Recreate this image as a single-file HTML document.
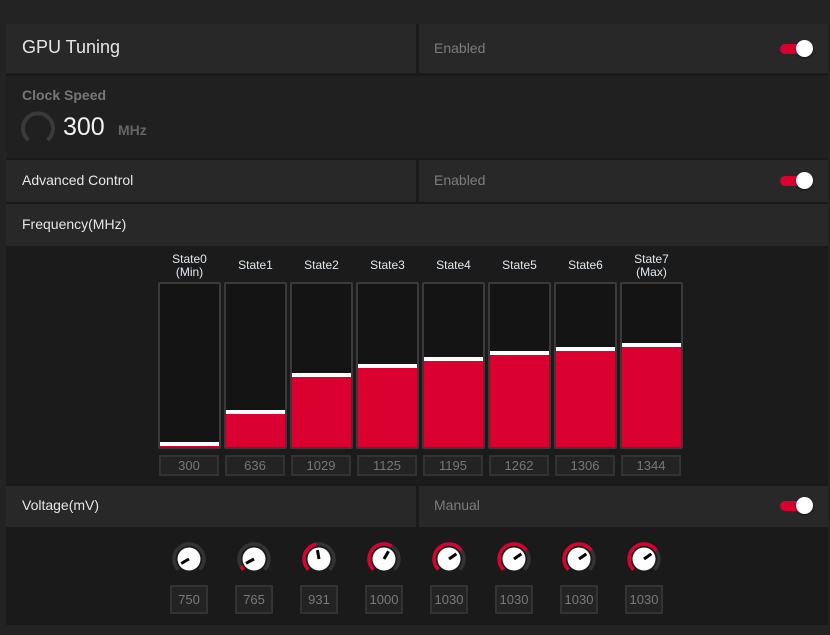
<!DOCTYPE html>
<html><head><meta charset="utf-8"><style>
*{margin:0;padding:0;box-sizing:border-box}
body{width:830px;height:635px;background:#232323;font-family:"Liberation Sans",sans-serif;position:relative;overflow:hidden}
.a{position:absolute}
.row{background:#282828}
.t{color:#e6e6e6;font-size:14px}
.g{color:#7c7c7c;font-size:14px}
.tog{position:absolute;width:32px;height:10px;border-radius:5px;background:#d9002f}
.tog:after{content:"";position:absolute;right:-1px;top:-4px;width:17px;height:17px;border-radius:50%;background:#fff;box-shadow:0 1px 2px rgba(0,0,0,.5)}
.bar{position:absolute;top:282px;width:63px;height:167px;border:2px solid #3a3a3a;background:#141414;border-radius:2px;overflow:hidden}
.fill{position:absolute;left:0;right:0;bottom:0;background:#da0030;border-top:4px solid #fff}
.lab{position:absolute;width:63px;text-align:center;color:#e0e8f0;font-size:12px;line-height:13px}
.val{position:absolute;top:455px;width:60px;height:21px;border:2px solid #333;background:#232323;color:#777;font-size:13px;text-align:center;line-height:17px}
.vb{position:absolute;top:585px;width:38px;height:29px;border:2px solid #333;background:#232323;color:#7a7a7a;font-size:13px;text-align:center;line-height:25px}
.k{position:absolute;top:537px}
</style></head><body>
<div class="a" style="left:0;top:0;width:830px;height:24px;background:#232323"></div>
<div class="a" style="left:6px;top:24px;width:822px;height:601px;background:#1a1a1a"></div>

<div class="a row" style="left:6px;top:24px;width:410px;height:49px"></div>
<div class="a row" style="left:419px;top:24px;width:409px;height:49px"></div>
<div class="a t" style="left:22px;top:37px;font-size:18px">GPU Tuning</div>
<div class="a g" style="left:434px;top:40px">Enabled</div>
<div class="tog" style="left:780px;top:44px"></div>

<div class="a" style="left:6px;top:76px;width:822px;height:82px;background:#202020"></div>
<div class="a" style="left:22px;top:87px;color:#777;font-size:14px;font-weight:bold">Clock Speed</div>
<svg class="a" style="left:20px;top:111px" width="36" height="34"><path d="M8.5 29 A15 15 0 1 1 27.5 29" fill="none" stroke="#3a3a3a" stroke-width="4"/></svg>
<div class="a" style="left:63px;top:113px;color:#f2f2f2;font-size:25px">300</div>
<div class="a" style="left:118px;top:122px;color:#666;font-size:14px;font-weight:bold">MHz</div>

<div class="a row" style="left:6px;top:160px;width:410px;height:42px"></div>
<div class="a row" style="left:419px;top:160px;width:409px;height:42px"></div>
<div class="a t" style="left:22px;top:172px">Advanced Control</div>
<div class="a g" style="left:434px;top:172px">Enabled</div>
<div class="tog" style="left:780px;top:176px"></div>

<div class="a row" style="left:6px;top:204px;width:822px;height:42px"></div>
<div class="a t" style="left:22px;top:216px">Frequency(MHz)</div>
<div class="a" style="left:6px;top:246px;width:822px;height:238px;background:#1b1b1b"></div>

<div class="lab" style="left:158px;top:253px">State0<br>(Min)</div>
<div class="lab" style="left:224px;top:259px">State1</div>
<div class="lab" style="left:290px;top:259px">State2</div>
<div class="lab" style="left:356px;top:259px">State3</div>
<div class="lab" style="left:422px;top:259px">State4</div>
<div class="lab" style="left:488px;top:259px">State5</div>
<div class="lab" style="left:554px;top:259px">State6</div>
<div class="lab" style="left:620px;top:253px">State7<br>(Max)</div>

<div class="bar" style="left:158px"><div class="fill" style="height:5px"></div></div>
<div class="bar" style="left:224px"><div class="fill" style="height:37px"></div></div>
<div class="bar" style="left:290px"><div class="fill" style="height:74px"></div></div>
<div class="bar" style="left:356px"><div class="fill" style="height:83px"></div></div>
<div class="bar" style="left:422px"><div class="fill" style="height:90px"></div></div>
<div class="bar" style="left:488px"><div class="fill" style="height:96px"></div></div>
<div class="bar" style="left:554px"><div class="fill" style="height:100px"></div></div>
<div class="bar" style="left:620px"><div class="fill" style="height:104px"></div></div>

<div class="val" style="left:159px">300</div>
<div class="val" style="left:225px">636</div>
<div class="val" style="left:291px">1029</div>
<div class="val" style="left:357px">1125</div>
<div class="val" style="left:423px">1195</div>
<div class="val" style="left:489px">1262</div>
<div class="val" style="left:555px">1306</div>
<div class="val" style="left:621px">1344</div>

<div class="a row" style="left:6px;top:486px;width:410px;height:41px"></div>
<div class="a row" style="left:419px;top:486px;width:409px;height:41px"></div>
<div class="a t" style="left:22px;top:497px">Voltage(mV)</div>
<div class="a g" style="left:434px;top:497px">Manual</div>
<div class="tog" style="left:780px;top:501px"></div>

<svg class="k" style="left:167px" width="44" height="44"><path d="M11.39 32.61 A15 15 0 1 1 32.61 32.61" fill="none" stroke="#333" stroke-width="3.5"/><circle cx="22" cy="22" r="11.5" fill="#fff"/><line x1="22" y1="22" x2="14.2" y2="26.5" stroke="#000" stroke-width="3"/></svg>
<svg class="k" style="left:232px" width="44" height="44"><path d="M11.39 32.61 A15 15 0 1 1 32.61 32.61" fill="none" stroke="#333" stroke-width="3.5"/><path d="M11.39 32.61 A15 15 0 0 1 9.01 29.5" fill="none" stroke="#da0030" stroke-width="3.5"/><circle cx="22" cy="22" r="11.5" fill="#fff"/><line x1="22" y1="22" x2="14" y2="26.3" stroke="#000" stroke-width="3"/></svg>
<svg class="k" style="left:297px" width="44" height="44"><path d="M11.39 32.61 A15 15 0 1 1 32.61 32.61" fill="none" stroke="#333" stroke-width="3.5"/><path d="M11.39 32.61 A15 15 0 0 1 19.4 7.23" fill="none" stroke="#da0030" stroke-width="3.5"/><circle cx="22" cy="22" r="11.5" fill="#fff"/><line x1="22" y1="22" x2="20.44" y2="13.14" stroke="#000" stroke-width="3"/></svg>
<svg class="k" style="left:362px" width="44" height="44"><path d="M11.39 32.61 A15 15 0 1 1 32.61 32.61" fill="none" stroke="#333" stroke-width="3.5"/><path d="M11.39 32.61 A15 15 0 0 1 29.5 9.01" fill="none" stroke="#da0030" stroke-width="3.5"/><circle cx="22" cy="22" r="11.5" fill="#fff"/><line x1="22" y1="22" x2="26.5" y2="14.21" stroke="#000" stroke-width="3"/></svg>
<svg class="k" style="left:427px" width="44" height="44"><path d="M11.39 32.61 A15 15 0 1 1 32.61 32.61" fill="none" stroke="#333" stroke-width="3.5"/><path d="M11.39 32.61 A15 15 0 1 1 34.29 13.4" fill="none" stroke="#da0030" stroke-width="3.5"/><circle cx="22" cy="22" r="11.5" fill="#fff"/><line x1="22" y1="22" x2="29.37" y2="16.84" stroke="#000" stroke-width="3"/></svg>
<svg class="k" style="left:492px" width="44" height="44"><path d="M11.39 32.61 A15 15 0 1 1 32.61 32.61" fill="none" stroke="#333" stroke-width="3.5"/><path d="M11.39 32.61 A15 15 0 1 1 34.29 13.4" fill="none" stroke="#da0030" stroke-width="3.5"/><circle cx="22" cy="22" r="11.5" fill="#fff"/><line x1="22" y1="22" x2="29.37" y2="16.84" stroke="#000" stroke-width="3"/></svg>
<svg class="k" style="left:557px" width="44" height="44"><path d="M11.39 32.61 A15 15 0 1 1 32.61 32.61" fill="none" stroke="#333" stroke-width="3.5"/><path d="M11.39 32.61 A15 15 0 1 1 34.29 13.4" fill="none" stroke="#da0030" stroke-width="3.5"/><circle cx="22" cy="22" r="11.5" fill="#fff"/><line x1="22" y1="22" x2="29.37" y2="16.84" stroke="#000" stroke-width="3"/></svg>
<svg class="k" style="left:622px" width="44" height="44"><path d="M11.39 32.61 A15 15 0 1 1 32.61 32.61" fill="none" stroke="#333" stroke-width="3.5"/><path d="M11.39 32.61 A15 15 0 1 1 34.29 13.4" fill="none" stroke="#da0030" stroke-width="3.5"/><circle cx="22" cy="22" r="11.5" fill="#fff"/><line x1="22" y1="22" x2="29.37" y2="16.84" stroke="#000" stroke-width="3"/></svg>

<div class="vb" style="left:170px">750</div>
<div class="vb" style="left:235px">765</div>
<div class="vb" style="left:300px">931</div>
<div class="vb" style="left:365px">1000</div>
<div class="vb" style="left:430px">1030</div>
<div class="vb" style="left:495px">1030</div>
<div class="vb" style="left:560px">1030</div>
<div class="vb" style="left:625px">1030</div>
</body></html>
